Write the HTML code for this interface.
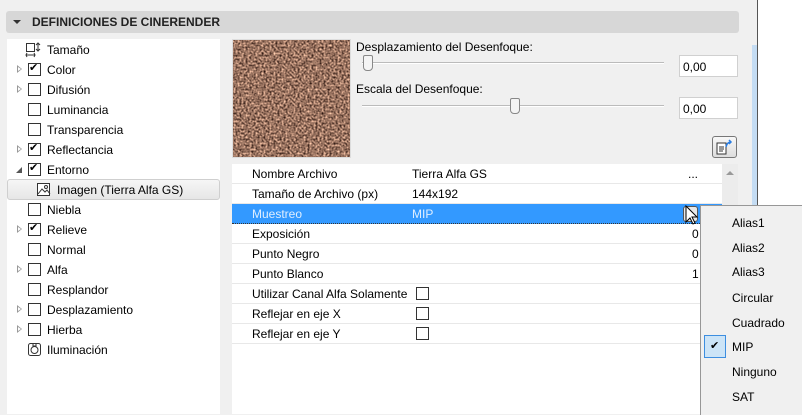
<!DOCTYPE html><html><head><style>
body{margin:0;width:802px;height:414px;background:#f0f0f0;font-family:"Liberation Sans",sans-serif;font-size:12px;color:#000;position:relative;overflow:hidden}
.a{position:absolute}
.hdr{left:6px;top:11px;width:733px;height:22px;background:#d7d7d7;border-radius:3px}
.hdr span{position:absolute;left:26px;top:4px;font-weight:bold;font-size:12px;color:#222}
.lp{left:7px;top:39px;width:213px;height:375px;background:#fff}
.it{position:absolute;left:47px;font-size:12px}
.cb{position:absolute;left:28px;width:11px;height:11px;border:1px solid #333;background:#fff}
.cb.c::after{content:"✔";position:absolute;left:0;top:-3px;font-size:11px}
.tri{position:absolute;left:10px;width:0;height:0;border-left:5px solid #999;border-top:4px solid transparent;border-bottom:4px solid transparent}
.tri::after{content:"";position:absolute;left:-4px;top:-2px;border-left:3px solid #fff;border-top:2px solid transparent;border-bottom:2px solid transparent}
.tb{left:232px;top:164px;width:490px;height:250px;background:#fff}
.row{position:absolute;left:0;width:490px;height:19px;border-bottom:1px solid #e8e8e8}
.row .k{position:absolute;left:20px;top:3px}
.row .v{position:absolute;left:180px;top:3px}
.sq{position:absolute;left:184px;top:3px;width:11px;height:11px;border:1px solid #333}
.inp{background:#fff;border:1px solid #d0d0d0;width:57px;height:20px;font-size:12px}
.inp span{position:absolute;left:3px;top:4px}
.menu{left:700px;top:205px;width:102px;height:209px;background:#f0f0f0;border:1px solid #979797;border-right:none;border-bottom:none}
.mi{position:absolute;left:31px;font-size:12px}
</style></head><body>
<div class="a hdr"><div class="a" style="left:7px;top:9px;border-top:4px solid #333;border-left:4px solid transparent;border-right:4px solid transparent"></div><span>DEFINICIONES DE CINERENDER</span></div>
<div class="a lp">
<svg class="a" style="left:18px;top:3px" width="16" height="16"><rect x="1.5" y="1.5" width="8" height="8" fill="none" stroke="#333"/><path d="M1 13h9M2 11l-1 2 1 2M9 11l1 2-1 2M13 1v8M11 3l2-2 2 2M11 7l2 2 2-2" stroke="#333" fill="none"/></svg>
<div class="it" style="left:40px;top:4px">Tamaño</div>
<div class="tri" style="top:26px"></div><div class="cb c" style="top:24px;left:21px"></div><div class="it" style="left:40px;top:24px">Color</div>
<div class="tri" style="top:46px"></div><div class="cb" style="top:44px;left:21px"></div><div class="it" style="left:40px;top:44px">Difusión</div>
<div class="cb" style="top:64px;left:21px"></div><div class="it" style="left:40px;top:64px">Luminancia</div>
<div class="cb" style="top:84px;left:21px"></div><div class="it" style="left:40px;top:84px">Transparencia</div>
<div class="tri" style="top:106px"></div><div class="cb c" style="top:104px;left:21px"></div><div class="it" style="left:40px;top:104px">Reflectancia</div>
<div class="a" style="left:9px;top:128px;border-bottom:6px solid #555;border-left:6px solid transparent"></div><div class="cb c" style="top:124px;left:21px"></div><div class="it" style="left:40px;top:124px">Entorno</div>
<div class="a" style="left:0;top:140px;width:211px;height:19px;background:linear-gradient(#f6f6f6,#e6e6e6);border:1px solid #cfcfcf;border-radius:3px"></div>
<svg class="a" style="left:29px;top:143px" width="15" height="15"><rect x="1.5" y="1.5" width="12" height="12" fill="#fff" stroke="#333"/><path d="M2 12l4-5 3 3 2-2 3 4" fill="none" stroke="#333"/><circle cx="10" cy="5" r="1.5" fill="none" stroke="#333"/></svg>
<div class="it" style="left:50px;top:144px">Imagen (Tierra Alfa GS)</div>
<div class="cb" style="top:164px;left:21px"></div><div class="it" style="left:40px;top:164px">Niebla</div>
<div class="tri" style="top:186px"></div><div class="cb c" style="top:184px;left:21px"></div><div class="it" style="left:40px;top:184px">Relieve</div>
<div class="cb" style="top:204px;left:21px"></div><div class="it" style="left:40px;top:204px">Normal</div>
<div class="tri" style="top:226px"></div><div class="cb" style="top:224px;left:21px"></div><div class="it" style="left:40px;top:224px">Alfa</div>
<div class="cb" style="top:244px;left:21px"></div><div class="it" style="left:40px;top:244px">Resplandor</div>
<div class="tri" style="top:266px"></div><div class="cb" style="top:264px;left:21px"></div><div class="it" style="left:40px;top:264px">Desplazamiento</div>
<div class="tri" style="top:286px"></div><div class="cb" style="top:284px;left:21px"></div><div class="it" style="left:40px;top:284px">Hierba</div>
<svg class="a" style="left:20px;top:302px" width="15" height="16"><rect x="1.5" y="2.5" width="12" height="12" rx="2" fill="none" stroke="#333"/><circle cx="7.5" cy="9" r="3.5" fill="none" stroke="#333"/><path d="M6 3v2h3V3" stroke="#333" fill="none"/></svg>
<div class="it" style="left:40px;top:304px">Iluminación</div>
</div>
<svg class="a" style="left:232px;top:39px" width="119" height="119"><filter id="n" x="0" y="0" width="100%" height="100%" color-interpolation-filters="sRGB"><feTurbulence type="fractalNoise" baseFrequency="0.5" numOctaves="2" seed="3"/><feColorMatrix values="1.3 0 0 0 -0.05 1.1 0 0 0 -0.1 0.95 0 0 0 -0.1 0 0 0 0 1"/></filter><rect width="119" height="119" fill="#9a7560"/><rect width="119" height="119" filter="url(#n)"/><rect x="0.5" y="0.5" width="118" height="118" fill="none" stroke="#ddd"/></svg>
<div class="a" style="left:356px;top:40px">Desplazamiento del Desenfoque:</div>
<div class="a" style="left:362px;top:62px;width:302px;height:1px;background:#bbb;border-bottom:1px solid #fff"></div>
<div class="a" style="left:363px;top:55px;width:8px;height:14px;background:#f4f4f4;border:1px solid #888;border-radius:2px 2px 4px 4px"></div>
<div class="a inp" style="left:679px;top:55px"><span>0,00</span></div>
<div class="a" style="left:356px;top:82px">Escala del Desenfoque:</div>
<div class="a" style="left:362px;top:105px;width:302px;height:1px;background:#bbb;border-bottom:1px solid #fff"></div>
<div class="a" style="left:510px;top:98px;width:8px;height:14px;background:#f4f4f4;border:1px solid #888;border-radius:2px 2px 4px 4px"></div>
<div class="a inp" style="left:679px;top:97px"><span>0,00</span></div>
<div class="a" style="left:712px;top:136px;width:23px;height:20px;background:linear-gradient(#f8f8f8,#ddd);border:1px solid #777;border-radius:3px"><svg width="23" height="20"><rect x="4" y="6" width="9" height="11" fill="#fff" stroke="#333"/><path d="M6 10h5M6 12h5M6 14h4" stroke="#333"/><path d="M13 10q1-5 5-5M16 3l2 2-2 2" stroke="#2a7de1" stroke-width="1.5" fill="none"/></svg></div>
<div class="a tb">
<div class="row" style="top:0"><span class="k">Nombre Archivo</span><span class="v">Tierra Alfa GS</span><span class="a" style="left:456px;top:3px">...</span></div>
<div class="row" style="top:20px"><span class="k">Tamaño de Archivo (px)</span><span class="v">144x192</span></div>
<div class="row" style="top:40px;background:#3399ff;color:#dfeeff;border-bottom:1px dotted #333"><span class="k">Muestreo</span><span class="v">MIP</span><div class="a" style="left:451px;top:2px;width:13px;height:14px;background:#e8e8e8;border:1px solid #555;border-radius:3px"></div></div>
<div class="row" style="top:60px"><span class="k">Exposición</span><span class="a" style="left:460px;top:3px">0</span></div>
<div class="row" style="top:80px"><span class="k">Punto Negro</span><span class="a" style="left:460px;top:3px">0</span></div>
<div class="row" style="top:100px"><span class="k">Punto Blanco</span><span class="a" style="left:460px;top:3px">1</span></div>
<div class="row" style="top:120px"><span class="k">Utilizar Canal Alfa Solamente</span><div class="sq"></div></div>
<div class="row" style="top:140px"><span class="k">Reflejar en eje X</span><div class="sq"></div></div>
<div class="row" style="top:160px"><span class="k">Reflejar en eje Y</span><div class="sq"></div></div>
</div>
<div class="a" style="left:722px;top:164px;width:16px;height:250px;background:#ececec"></div>
<div class="a" style="left:726px;top:171px;border-bottom:4px solid #999;border-left:4px solid transparent;border-right:4px solid transparent"></div>
<svg class="a" style="left:685px;top:205px" width="16" height="24"><path d="M1 1v16l4-4 3 6 2-1-3-6h5z" fill="#fff" stroke="#000"/></svg>
<div class="a" style="left:752px;top:0;width:5px;height:414px;background:#f0f0f0"></div>
<div class="a" style="left:752px;top:45px;width:5px;height:369px;background:#c4dcf3"></div>
<div class="a" style="left:757px;top:0;width:1px;height:414px;background:#555"></div>
<div class="a" style="left:758px;top:0;width:44px;height:414px;background:#fff"></div>
<div class="a menu">
<div class="mi" style="top:10px">Alias1</div>
<div class="mi" style="top:35px">Alias2</div>
<div class="mi" style="top:59px">Alias3</div>
<div class="mi" style="top:85px">Circular</div>
<div class="mi" style="top:110px">Cuadrado</div>
<div class="a" style="left:3px;top:129px;width:20px;height:21px;background:#cce4f7;border:1px solid #3d8ee0"></div>
<div class="a" style="left:9px;top:133px;font-size:11px">✔</div>
<div class="mi" style="top:134px">MIP</div>
<div class="mi" style="top:159px">Ninguno</div>
<div class="mi" style="top:184px">SAT</div>
</div>
</body></html>
